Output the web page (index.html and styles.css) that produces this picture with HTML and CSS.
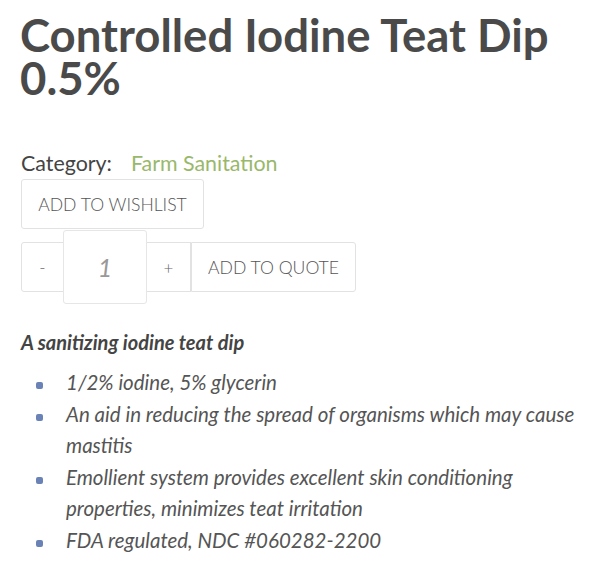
FILE: index.html
```html
<!DOCTYPE html>
<html>
<head>
<meta charset="utf-8">
<link rel="stylesheet" href="styles.css">
</head>
<body>
<div class="product">
  <h1 class="title">Controlled Iodine Teat Dip 0.5%</h1>
  <div class="meta"><span class="meta-label">Category:</span><a class="meta-link" href="#">Farm Sanitation</a></div>
  <button class="btn wishlist">ADD TO WISHLIST</button>
  <div class="cart-row">
    <button class="btn qty-btn minus">-</button>
    <div class="qty">1</div>
    <button class="btn qty-btn plus">+</button>
    <button class="btn quote">ADD TO QUOTE</button>
  </div>
  <div class="desc">
    <p class="lead">A sanitizing iodine teat dip</p>
    <ul class="features">
      <li>1/2% iodine, 5% glycerin</li>
      <li>An aid in reducing the spread of organisms which may cause mastitis</li>
      <li>Emollient system provides excellent skin conditioning properties, minimizes teat irritation</li>
      <li>FDA regulated, NDC #060282-2200</li>
    </ul>
  </div>
</div>
</body>
</html>
```
FILE: styles.css
```css
html, body {
  margin: 0;
  padding: 0;
  background: #fff;
}
body {
  font-family: Lato, "Open Sans", sans-serif;
  color: #4a4a4a;
}
.product {
  padding: 13px 20px 0 21px;
  width: 560px;
}
.title {
  margin: 0 0 0 -1px;
  font-size: 45.5px;
  font-weight: 700;
  line-height: 43px;
  color: #4a4a4a;
}
.meta {
  margin-top: 52px;
  font-size: 21.4px;
  line-height: 24px;
  display: flex;
  gap: 19px;
}
.meta-label {
  color: #444;
}
.meta-link {
  color: #99b86b;
  text-decoration: none;
}
.btn {
  font-family: Lato, sans-serif;
  background: #fff;
  border: 1px solid #e2e2e2;
  border-radius: 3px;
  color: #555;
  font-weight: 300;
  font-size: 17.6px;
  box-sizing: border-box;
  height: 50px;
  padding: 0;
  cursor: pointer;
}
.wishlist {
  display: block;
  margin-top: 4px;
  width: 183px;
}
.cart-row {
  display: flex;
  align-items: center;
  margin-top: 1px;
}
.qty-btn {
  width: 43px;
  font-size: 17px;
  color: #666;
}
.minus {
  border-radius: 3px 0 0 3px;
}
.plus {
  border-radius: 0;
  width: 44px;
  border-left: none;
}
.qty {
  box-sizing: border-box;
  width: 84px;
  height: 74px;
  border: 1px solid #e6e6e6;
  border-radius: 3px;
  margin-left: -1px;
  display: flex;
  align-items: center;
  justify-content: center;
  font-style: italic;
  font-size: 25px;
  color: #999;
  background: #fff;
}
.quote {
  width: 165px;
  border-radius: 0 3px 3px 0;
}
.desc {
  margin-top: 25px;
}
.lead {
  margin: 0;
  font-size: 20px;
  font-weight: 700;
  font-style: italic;
  color: #444;
  line-height: 26px;
}
.features {
  list-style: none;
  margin: 12px 0 0 0;
  padding: 0 0 0 45px;
}
.features li {
  position: relative;
  font-size: 20.5px;
  font-style: italic;
  color: #555;
  line-height: 31px;
  margin-bottom: 1px;
}
.features li::before {
  content: "";
  position: absolute;
  left: -30px;
  top: 15px;
  width: 7px;
  height: 7px;
  border-radius: 2px;
  background: #6a82b5;
}
```
